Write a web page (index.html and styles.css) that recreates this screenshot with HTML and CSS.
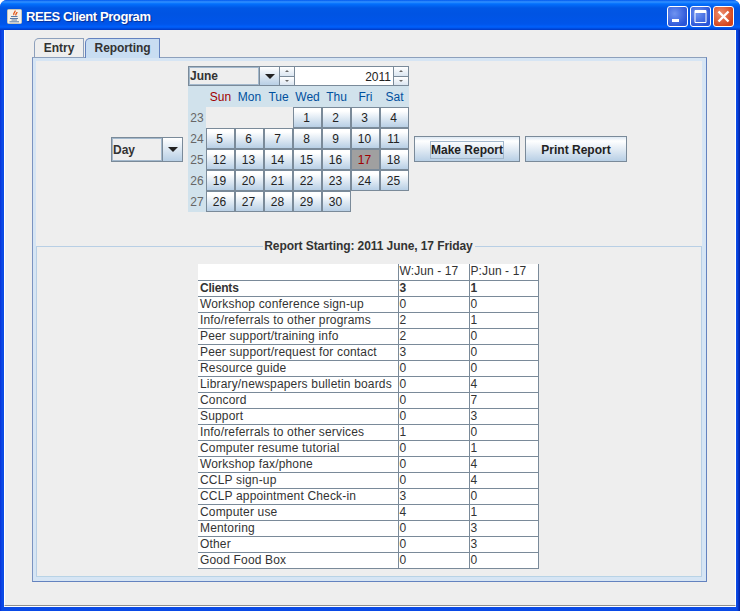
FILE: index.html
```html
<!DOCTYPE html>
<html>
<head>
    <title>REES Client Program</title>
    <link rel="stylesheet" href="styles.css">
</head>

<body>
    <div class="window">
        <div class="titleBar">
            <svg class="appIcon" width="16" height="15" viewBox="0 0 16 15">
                <rect x="0.5" y="0.5" width="14" height="14" rx="1" fill="#f4f2ea" stroke="#c9c6b8"/>
                <path d="M8 1.500c1 1.500-2.500 2.500-1 4.500M10 3c0 1.500-2 2-1 3.500" fill="none" stroke="#e2591b" stroke-width="1.300"/>
                <path d="M4 7.500h6.500M3 9.500h8M4.500 11h5.500M2.500 12.800h9.500" fill="none" stroke="#5a7ba6" stroke-width="1"/>
            </svg>
            <span class="titleText">REES Client Program</span>
            <div class="winButtons">
                <div class="winBtn"><svg width="21" height="21" viewBox="0 0 21 21"><rect x="5" y="13" width="7" height="3" fill="#fff"/></svg></div>
                <div class="winBtn"><svg width="21" height="21" viewBox="0 0 21 21"><path d="M5 4.500h11v12H5z" fill="none" stroke="#fff" stroke-width="1"/><rect x="5" y="4" width="11" height="3" fill="#fff"/></svg></div>
                <div class="winBtn closeBtn"><svg width="21" height="21" viewBox="0 0 21 21"><path d="M5.500 5.500l10 10M15.500 5.500l-10 10" stroke="#fff" stroke-width="2.400" fill="none"/></svg></div>
            </div>
        </div>

        <div class="content">
            <div class="tabs">
                <div class="tab">Entry</div>
                <div class="tab tabOn">Reporting</div>
            </div>
            <div class="panel">
                <div class="topRow">
                    <div class="combo dayCombo">
                        <div class="comboText focusText">Day</div>
                        <div class="comboArrow"><i></i></div>
                    </div>

                    <div class="calendar">
                        <div class="calTop">
                            <div class="combo monthCombo">
                                <div class="comboText focusText">June</div>
                                <div class="comboArrow"><i></i></div>
                            </div>
                            <div class="spinner"><b class="up"></b><b class="down"></b></div>
                            <div class="yearField">2011</div>
                            <div class="spinner"><b class="up"></b><b class="down"></b></div>
                        </div>
                        <div class="calGrid">
                            <span class="wk"></span><span class="dn sun">Sun</span><span class="dn">Mon</span><span class="dn">Tue</span><span class="dn">Wed</span><span class="dn">Thu</span><span class="dn">Fri</span><span class="dn">Sat</span>

                            <span class="wk">23</span><span class="empty"></span><span class="empty"></span><span class="empty"></span>
                            <span class="day">1</span><span class="day">2</span><span class="day">3</span><span class="day">4</span>

                            <span class="wk">24</span><span class="day">5</span><span class="day">6</span><span class="day">7</span><span class="day">8</span><span class="day">9</span><span class="day">10</span><span class="day">11</span>

                            <span class="wk">25</span><span class="day">12</span><span class="day">13</span><span class="day">14</span><span class="day">15</span><span class="day">16</span><span class="day today">17</span><span class="day">18</span>

                            <span class="wk">26</span><span class="day">19</span><span class="day">20</span><span class="day">21</span><span class="day">22</span><span class="day">23</span><span class="day">24</span><span class="day">25</span>

                            <span class="wk">27</span><span class="day">26</span><span class="day">27</span><span class="day">28</span><span class="day">29</span><span class="day">30</span>
                        </div>
                    </div>

                    <div class="btn makeBtn"><span class="focusBox">Make Report</span></div>
                    <div class="btn printBtn">Print Report</div>
                </div>

                <fieldset class="group">
                    <legend>Report Starting: 2011 June, 17 Friday</legend>
                    <table class="report">
                        <tr class="head"><td></td><td>W:Jun - 17</td><td>P:Jun - 17</td></tr>
                        <tr class="bold"><td>Clients</td><td>3</td><td>1</td></tr>
                        <tr><td>Workshop conference sign-up</td><td>0</td><td>0</td></tr>
                        <tr><td>Info/referrals to other programs</td><td>2</td><td>1</td></tr>
                        <tr><td>Peer support/training info</td><td>2</td><td>0</td></tr>
                        <tr><td>Peer support/request for contact</td><td>3</td><td>0</td></tr>
                        <tr><td>Resource guide</td><td>0</td><td>0</td></tr>
                        <tr><td>Library/newspapers bulletin boards</td><td>0</td><td>4</td></tr>
                        <tr><td>Concord</td><td>0</td><td>7</td></tr>
                        <tr><td>Support</td><td>0</td><td>3</td></tr>
                        <tr><td>Info/referrals to other services</td><td>1</td><td>0</td></tr>
                        <tr><td>Computer resume tutorial</td><td>0</td><td>1</td></tr>
                        <tr><td>Workshop fax/phone</td><td>0</td><td>4</td></tr>
                        <tr><td>CCLP sign-up</td><td>0</td><td>4</td></tr>
                        <tr><td>CCLP appointment Check-in</td><td>3</td><td>0</td></tr>
                        <tr><td>Computer use</td><td>4</td><td>1</td></tr>
                        <tr><td>Mentoring</td><td>0</td><td>3</td></tr>
                        <tr><td>Other</td><td>0</td><td>3</td></tr>
                        <tr><td>Good Food Box</td><td>0</td><td>0</td></tr>
                    </table>
                </fieldset>
            </div>
        </div>
    </div>
</body>
</html>
```

FILE: styles.css
```css
html, body { margin: 0; padding: 0; }

body
{
    width: 740px;
    height: 611px;
    overflow: hidden;
    background: #fff;
    font: 12px "Liberation Sans", Arial, sans-serif;
    color: #333;
}

.window
{
    width: 740px;
    height: 611px;
    box-sizing: border-box;
    display: flex;
    flex-direction: column;
    border-radius: 7px 7px 0 0;
    background: linear-gradient(90deg, #0831d9 0, #0a4ae6 2px, #0a4ae6 737px, #001ea0 740px);
    overflow: hidden;
}

.titleBar
{
    height: 30px;
    flex: none;
    display: flex;
    align-items: center;
    padding: 0 6px 0 7px;
    background: linear-gradient(#0058ee 0, #3593ff 2px, #127dff 3px, #036ffc 4px, #0057e5 8px, #0054e3 14px, #0055ea 24px, #0060fc 27px, #0039c4 30px);
}

.appIcon { flex: none; margin-top: 3px; }

.titleText
{
    margin: 2px 0 0 3px;
    font: bold 13px "Liberation Sans", Arial, sans-serif;
    letter-spacing: -0.4px;
    color: #fff;
    text-shadow: 1px 1px 1px #0a2f90;
    flex: 1;
}

.winButtons { display: flex; gap: 2px; margin-top: 3px; }

.winBtn
{
    width: 21px;
    height: 21px;
    box-sizing: border-box;
    border: 1px solid #fff;
    border-radius: 3px;
    background: radial-gradient(circle at 35% 35%, #6f93f0, #2a55d8 75%);
    display: flex;
    align-items: center;
    justify-content: center;
}
.winBtn svg { margin: -1px; flex: none; }
.closeBtn { background: radial-gradient(circle at 35% 35%, #ee9070, #d4441c 75%); }

.content
{
    flex: 1;
    margin: 0 4px 5px;
    box-sizing: border-box;
    padding: 8px 28px 23px 27px;
    background: #eee;
    border-bottom: 1px solid #8e8f8f;
    border-left: 1px solid #fff;
    border-right: 1px solid #fff;
    box-shadow: 0 1px 0 #fff;
    display: flex;
    flex-direction: column;
}

/* tabs */
.tabs { display: flex; padding-left: 2px; height: 19px; flex: none; position: relative; z-index: 1; }

.tab
{
    box-sizing: border-box;
    height: 19px;
    width: 50px;
    border: 1px solid #8da0bc;
    border-bottom: none;
    border-radius: 5px 0 0 0;
    font-weight: bold;
    text-align: center;
    line-height: 18px;
    background: #eee;
}
.tabOn { width: 75px; height: 20px; background: #c8ddf2; margin-left: 1px; border-color: #6382bf; letter-spacing: -0.1px; }

/* main panel */
.panel
{
    flex: 1;
    box-sizing: border-box;
    border: 1px solid #6382bf;
    border-left-color: #7b93c0;
    border-top-color: #8da0bc;
    background: #eee;
    display: flex;
    flex-direction: column;
    box-shadow: inset 0 0 0 3px #d6e5f4, inset -4px -4px 0 0 #d6e5f4;
}

.topRow
{
    height: 181px;
    flex: none;
    display: flex;
    align-items: flex-start;
    gap: 5px;
    padding: 8px 0 0 78px;
    box-sizing: border-box;
}

/* combos */
.combo
{
    display: flex;
    box-sizing: border-box;
    border: 1px solid #7a8a99;
    background: #eee;
    font-weight: bold;
}
.comboText
{
    flex: 1;
    box-sizing: border-box;
    line-height: 20px;
}
.focusText { border: 1px solid #a3b8cc; }

.comboArrow
{
    width: 19px;
    border-left: 1px solid #7a8a99;
    background: linear-gradient(#fff, #b8cfe5);
    display: flex;
    align-items: center;
    justify-content: center;
}
.comboArrow i
{
    width: 0;
    height: 0;
    border-left: 5px solid transparent;
    border-right: 5px solid transparent;
    border-top: 5px solid #222;
}

.dayCombo { width: 72px; height: 25px; margin-top: 71px; }
.dayCombo .comboText { line-height: 23px; font-size: 12px; }

.monthCombo { width: 91px; height: 20px; border-right: none; }
.monthCombo .comboText { line-height: 16px; }

/* calendar */
.calendar { width: 221px; flex: none; }

.calTop { display: flex; height: 20px; }

.spinner
{
    width: 16px;
    flex: none;
    box-sizing: border-box;
    border: 1px solid #7a8a99;
    background: #eee;
    display: flex;
    flex-direction: column;
}
.spinner b
{
    flex: 1;
    display: flex;
    align-items: center;
    justify-content: center;
    background: linear-gradient(#fff, #dbe6f1);
}
.spinner .down { border-top: 1px solid #7a8a99; }
.spinner b::after
{
    content: "";
    width: 0;
    height: 0;
    border-left: 2px solid transparent;
    border-right: 2px solid transparent;
}
.spinner .up::after { border-bottom: 2px solid #666; }
.spinner .down::after { border-top: 2px solid #666; }

.yearField
{
    flex: 1;
    box-sizing: border-box;
    background: #fff;
    color: #222;
    text-align: right;
    padding-right: 2px;
    line-height: 20px;
    border-bottom: 1px solid #7a8a99;
    border-top: 1px solid #7a8a99;
    font-size: 12px;
}

.calGrid
{
    display: grid;
    grid-template-columns: 18px repeat(7, 29px);
    grid-template-rows: 21px repeat(5, 21px);
    background: linear-gradient(#d1e2ec, #d1e2ec) left / 18px 100% no-repeat,
                linear-gradient(#d1e2ec, #d1e2ec) top / 100% 21px no-repeat;
    font-size: 12px;
}
.calGrid span { display: flex; align-items: center; justify-content: center; }
.dn { color: #00509e; }
.sun { color: #a00000; }
.wk { color: #666; }
.day
{
    box-sizing: border-box;
    padding: 1px 2px 0 0;
    border: 1px solid #7a8a99;
    background: linear-gradient(#fff 0, #fff 3px, #b8cfe5);
    color: #222;
}
.today { background: #a0a0a0; color: #a00000; }

/* buttons */
.btn
{
    box-sizing: border-box;
    height: 26px;
    margin-top: 70px;
    padding-top: 1px;
    border: 1px solid #7a8a99;
    background: linear-gradient(#dde8f3 0, #fff 4px, #b8cfe5);
    font-weight: bold;
    display: flex;
    align-items: center;
    justify-content: center;
    color: #222;
}
.makeBtn { width: 106px; }
.printBtn { width: 102px; }
.focusBox { border: 1px solid #a3b8cc; padding: 0; line-height: 16px; }

/* report */
.group
{
    flex: 1;
    margin: 0 4px 4px 3px;
    padding: 11px 0 0;
    min-width: 0;
    border: 1px solid #b8cfe5;
    border-bottom-color: #b8d3e6;
}
.group legend
{
    margin: 0 auto;
    padding: 0 2px 0 1px;
    font-weight: bold;
    line-height: 14px;
    letter-spacing: -0.08px;
}

.report
{
    margin-left: 161px;
    border-collapse: collapse;
    table-layout: fixed;
    width: 341px;
    font-size: 12px;
    color: #333;
    background: #fff;
}
.report td
{
    height: 16px;
    box-sizing: border-box;
    padding: 0 0 0 1px;
    border-bottom: 1px solid #7a8a99;
    border-right: 1px solid #7a8a99;
    line-height: 15px;
    white-space: nowrap;
    letter-spacing: 0.1px;
}
.report td:nth-child(1) { width: 200px; padding-left: 2px; letter-spacing: 0.17px; }
.report td:nth-child(2) { width: 71px; }
.report .bold td { font-weight: bold; letter-spacing: -0.2px; }
```
